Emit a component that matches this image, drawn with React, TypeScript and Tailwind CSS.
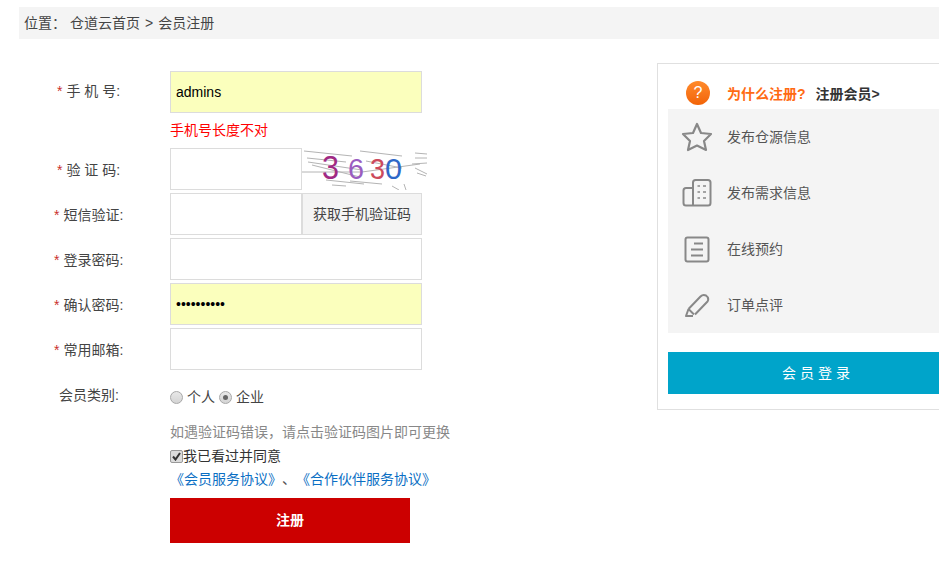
import React from "react";

const FONT = "font-['Liberation_Sans','Noto_Sans_CJK_SC',sans-serif] [text-spacing-trim:space-all]";

function Field({ bg = "bg-white", value = "", type = "text", w = "w-[252px]" }: { bg?: string; value?: string; type?: string; w?: string }) {
  return (
    <input
      readOnly
      type={type}
      value={value}
      className={`${w} h-[42px] border border-[#dcdcdc] ${bg} px-[5px] text-[14px] text-black outline-none ${FONT}`}
    />
  );
}

function Row({ pad, label, lead = "leading-[44px]", children }: { pad: string; label: React.ReactNode; lead?: string; children: React.ReactNode }) {
  return (
    <div className="flex h-[42px] mb-[3px]">
      <div className={`w-[170px] ${pad} text-[14px] ${lead} text-[#444]`}>
        <span className="text-[#c9302c] mr-[4px]">*</span>
        {label}
      </div>
      {children}
    </div>
  );
}

function Captcha() {
  const lines = [
    [2, 3, 50, 8], [5, 10, 44, 14], [6, 14, 60, 22], [10, 17, 58, 29], [0, 24, 60, 24],
    [24, 32, 62, 36], [30, 37, 44, 38], [58, 3, 100, 8], [60, 24, 118, 16], [48, 33, 80, 36],
    [113, 5, 125, 6], [113, 10, 125, 10], [110, 16, 125, 15], [113, 20, 125, 26], [90, 38, 97, 42],
    [102, 36, 104, 42], [115, 25, 124, 28], [64, 13, 100, 20],
  ];
  return (
    <svg width="125" height="42" viewBox="0 0 125 42" className="block">
      {lines.map((l, i) => (
        <line key={i} x1={l[0]} y1={l[1]} x2={l[2]} y2={l[3]} stroke="#b4b4b4" strokeWidth="1" />
      ))}
      <g fontFamily="'Liberation Sans', sans-serif">
        <text x="20" y="31" fill="#a02a84" fontSize="33" textLength="17" lengthAdjust="spacingAndGlyphs">3</text>
        <text x="46" y="31" fill="#9a5cc0" fontSize="29" textLength="16" lengthAdjust="spacingAndGlyphs">6</text>
        <text x="68" y="31" fill="#cc4a5c" fontSize="30" textLength="15" lengthAdjust="spacingAndGlyphs">3</text>
        <text x="83" y="31" fill="#2f68c8" fontSize="30" textLength="17" lengthAdjust="spacingAndGlyphs">0</text>
      </g>
    </svg>
  );
}

function Radio({ checked }: { checked?: boolean }) {
  return (
    <span className="flex h-[13px] w-[13px] items-center justify-center rounded-full border border-[#a8a8a8] bg-gradient-to-b from-[#e8e8e8] to-[#d4d4d4]">
      {checked && <span className="h-[5px] w-[5px] rounded-full bg-[#666]" />}
    </span>
  );
}

const Star = () => (
  <svg width="32" height="30" viewBox="0 0 32 30" fill="none" stroke="#888" strokeWidth="2.2" strokeLinejoin="round">
    <path d="M16 2 L20 11 L30 12 L23 19 L25 28 L16 23.5 L7 28 L9 19 L2 12 L12 11 Z" />
  </svg>
);
const Building = () => (
  <svg width="30" height="28" viewBox="0 0 30 28" fill="none" stroke="#888" strokeWidth="2">
    <path d="M11 9 H4 Q1.5 9 1.5 11.5 V24 Q1.5 26.5 4 26.5 H26 Q28.5 26.5 28.5 24 V3.5 Q28.5 1 26 1 H13.5 Q11 1 11 3.5 V26.5" />
    <path d="M15.5 7 H18 M21 7 H24 M15.5 13 H18 M21 13 H24 M15.5 19 H18 M21 19 H24" strokeWidth="1.6" />
  </svg>
);
const Doc = () => (
  <svg width="26" height="27" viewBox="0 0 26 27" fill="none" stroke="#888" strokeWidth="2">
    <rect x="1.5" y="1.5" width="23" height="24" rx="2" />
    <path d="M10 7.5 H19 M7 13.5 H19 M7 19.5 H19" />
  </svg>
);
const Pen = () => (
  <svg width="26" height="25" viewBox="0 0 26 25" fill="none" stroke="#888" strokeWidth="2" strokeLinejoin="round">
    <path d="M4.5 16 L16.5 3.5 Q19 1 22 2.5 Q25.5 5 23.5 8.5 L11 21.5" />
    <path d="M4.5 16 L10 21.5" />
    <path d="M4.5 16 L2 23 L9 23" />
  </svg>
);

function Item({ icon, text }: { icon: React.ReactNode; text: string }) {
  return (
    <div className="flex h-[56px] items-center">
      <div className="flex w-[59px] justify-center pr-[2px]">{icon}</div>
      <span className="text-[14px] text-[#555]">{text}</span>
    </div>
  );
}

export default function App() {
  return (
    <div className={`relative h-[564px] w-[939px] overflow-hidden bg-white ${FONT}`}>
      <div className="ml-[19px] mt-[7px] h-[32px] bg-[#f4f4f4] pl-[5px] text-[14px] leading-[32px] text-[#444]">
        位置：
        <span className="ml-[4px]">仓道云首页</span>
        <span className="mx-[5px]">&gt;</span>
        会员注册
      </div>

      <div className="flex">
        <div className="w-[657px] shrink-0 pt-[32px]">
          <Row pad="pl-[57px]" lead="leading-[40px]" label="手 机 号:">
            <Field bg="bg-[#fbffbd]" value="admins" />
          </Row>
          <div className="ml-[170px] h-[32px] text-[14px] leading-[28px] text-[#ff0000]">手机号长度不对</div>
          <Row pad="pl-[57px]" label="验 证 码:">
            <Field w="w-[132px]" />
            <Captcha />
          </Row>
          <Row pad="pl-[54px]" label="短信验证:">
            <div className="flex">
              <Field w="w-[132px]" />
              <button className="h-[42px] w-[120px] border border-[#dcdcdc] bg-[#f4f4f4] text-[14px] text-[#444]">获取手机验证码</button>
            </div>
          </Row>
          <Row pad="pl-[54px]" label="登录密码:">
            <Field />
          </Row>
          <Row pad="pl-[54px]" label="确认密码:">
            <Field bg="bg-[#fbffbd]" type="password" value="1234567890" />
          </Row>
          <Row pad="pl-[54px]" label="常用邮箱:">
            <Field />
          </Row>
          <div className="flex h-[40px]">
            <div className="w-[170px] pl-[59px] pt-[12px] text-[14px] leading-[20px] text-[#444]">会员类别:</div>
            <div className="flex h-[40px] items-center pt-[8px] text-[14px] text-[#444]">
              <Radio />
              <span className="ml-[4px] mr-[4px]">个人</span>
              <Radio checked />
              <span className="ml-[4px]">企业</span>
            </div>
          </div>
          <div className="ml-[170px]">
            <div className="mt-[9px] h-[20px] whitespace-nowrap text-[14px] leading-[20px] text-[#888]">如遇验证码错误，请点击验证码图片即可更换</div>
            <div className="mt-[4px] flex h-[20px] items-center text-[14px] text-[#333]">
              <span className="flex h-[13px] w-[13px] items-center justify-center rounded-[2px] border border-[#999] bg-[#dcdcdc]">
                <svg width="9" height="9" viewBox="0 0 9 9" fill="none" stroke="#333" strokeWidth="2"><path d="M1 4.5 L3.5 7.5 L8 1" /></svg>
              </span>
              我已看过并同意
            </div>
            <div className="mt-[3px] h-[20px] whitespace-nowrap text-[14px] leading-[20px] text-[#0b6fc4]">
              《会员服务协议》<span className="text-[#555]">、</span>《合作伙伴服务协议》
            </div>
            <button className="mt-[9px] h-[45px] w-[240px] bg-[#cc0000] text-[14px] font-bold text-white">注册</button>
          </div>
        </div>

        <div className="mt-[24px] h-[347px] w-[322px] shrink-0 border border-[#e0e0e0] pl-[10px]">
          <div className="flex h-[45px] items-center pt-[16px]">
            <div className="ml-[18px] flex h-[24px] w-[24px] -translate-y-[2px] items-center justify-center rounded-full bg-gradient-to-b from-[#ff8a2a] to-[#f26305] text-[16px] text-white">?</div>
            <span className="ml-[17px] text-[14px] font-bold text-[#ff6a13]">为什么注册?</span>
            <span className="ml-[10px] text-[14px] font-bold text-[#333]">注册会员&gt;</span>
          </div>
          <div className="h-[224px] bg-[#f4f4f4]">
            <Item icon={<Star />} text="发布仓源信息" />
            <Item icon={<Building />} text="发布需求信息" />
            <Item icon={<Doc />} text="在线预约" />
            <Item icon={<Pen />} text="订单点评" />
          </div>
          <button className="mt-[19px] h-[42px] w-[300px] bg-[#00a4ca] text-[14px] tracking-[4px] text-white">会员登录</button>
        </div>
      </div>
    </div>
  );
}
